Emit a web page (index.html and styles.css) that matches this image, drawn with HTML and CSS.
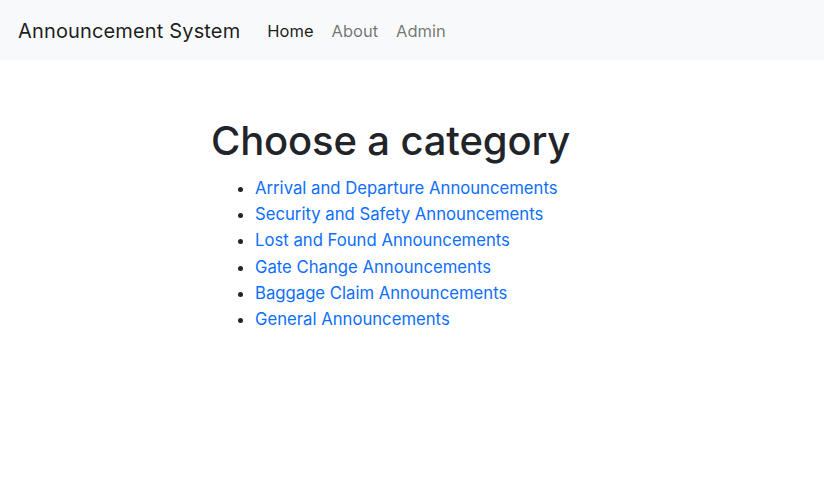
FILE: index.html
```html
<!DOCTYPE html>
<html lang="en">
<head>
<meta charset="utf-8">
<title>Announcement System</title>
<link rel="stylesheet" href="styles.css">
</head>
<body>
<nav class="navbar">
  <a class="brand" href="#">Announcement System</a>
  <ul class="nav">
    <li><a class="nav-link active" href="#">Home</a></li>
    <li><a class="nav-link" href="#">About</a></li>
    <li><a class="nav-link" href="#">Admin</a></li>
  </ul>
</nav>
<main class="content">
  <h1 class="title">Choose a category</h1>
  <ul class="categories">
    <li><a href="#">Arrival and Departure Announcements</a></li>
    <li><a href="#">Security and Safety Announcements</a></li>
    <li><a href="#">Lost and Found Announcements</a></li>
    <li><a href="#">Gate Change Announcements</a></li>
    <li><a href="#">Baggage Claim Announcements</a></li>
    <li><a href="#">General Announcements</a></li>
  </ul>
</main>
</body>
</html>
```
FILE: styles.css
```css
* { box-sizing: border-box; }
body {
  margin: 0;
  font-family: Inter, "Noto Sans", sans-serif;
  font-size: 16px;
  line-height: 1.5;
  color: #212529;
  background: #fff;
}
.navbar {
  display: flex;
  align-items: center;
  height: 60px;
  padding: 2px 18px 0;
  background: #f8f9fa;
}
.brand {
  font-size: 20px;
  letter-spacing: 0.15px;
  color: rgba(0,0,0,.9);
  text-decoration: none;
  margin-right: 18px;
}
.nav {
  display: flex;
  list-style: none;
  margin: 0;
  padding: 0;
}
.nav-link {
  display: block;
  padding: 8px 9px;
  font-size: 16.5px;
  color: rgba(0,0,0,.55);
  text-decoration: none;
}
.nav-link.active { color: rgba(0,0,0,.9); }
.content {
  padding: 57px 0 0 209px;
}
.title {
  margin: 0 0 10px 2px;
  font-size: 40px;
  font-weight: 500;
  line-height: 1.2;
  letter-spacing: -0.15px;
}
.categories {
  margin: 0;
  padding-left: 46px;
  font-size: 16.7px;
  line-height: 26.2px;
}
.categories a {
  color: #0d6efd;
  text-decoration: none;
}
```
